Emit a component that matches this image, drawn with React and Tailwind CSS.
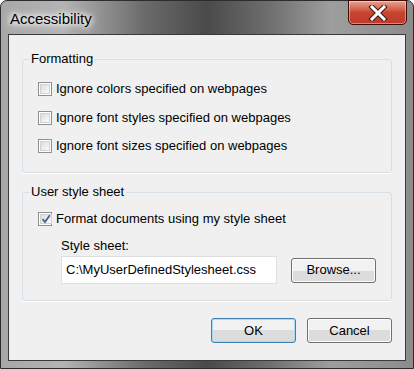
import React from 'react';

const font = { fontFamily: '"Segoe UI", Tahoma, "Liberation Sans", sans-serif' };

function CheckBox({ checked }) {
    return (
        <span className="w-[14px] h-[14px] shrink-0 border border-[#8f8f8f] bg-white p-[1px] flex">
            <span className="flex-1 border border-[#d2d2d2] bg-gradient-to-br from-[#dcdcdc] to-[#fbfbfb] flex items-center justify-center">
                {checked && (
                    <svg width="10" height="10" viewBox="0 0 10 10">
                        <path d="M1.5 5.2 L4 8 L8.8 1.2" fill="none" stroke="#4a5f97" strokeWidth="1.8" />
                    </svg>
                )}
            </span>
        </span>
    );
}

function Check({ label, checked }) {
    return (
        <label className="flex items-center gap-[4px] h-[14px] text-[13px] text-black">
            <CheckBox checked={checked} />
            <span>{label}</span>
        </label>
    );
}

function Button({ children, focused, className = '' }) {
    return (
        <button
            className={
                'h-[25px] rounded-[3px] border text-[13px] text-black bg-gradient-to-b from-[#f2f2f2] from-50% to-[#dcdcdc] to-50% ' +
                (focused ? 'border-[#3c7fb1] shadow-[inset_0_0_0_1px_#a8dcf4] ' : 'border-[#707070] shadow-[inset_0_0_0_1px_#fcfcfc] ') +
                className
            }
        >
            {children}
        </button>
    );
}

function GroupBox({ title, className = '', children }) {
    return (
        <fieldset className={'border border-[#d5dfe5] rounded-[3px] shadow-[0_1px_0_#fff] px-[15px] ' + className}>
            <legend className="ml-[-9px] px-[2px] text-[13px] leading-[14px] text-black">{title}</legend>
            {children}
        </fieldset>
    );
}

export default function App() {
    return (
        <div
            className="w-[414px] h-[369px] flex flex-col rounded-t-[7px] border border-[#2d2d2d] bg-[linear-gradient(90deg,#a8a8a8_0%,#b4b4b4_15%,#6a6a6a_35%,#4a4a4a_50%,#6e6e6e_65%,#9e9e9e_80%,#8c8c8c_100%)]"
            style={font}
        >
            <div className="h-[33px] flex items-start relative">
                <span className="mt-[7px] ml-[9px] text-[15px] text-black [text-shadow:0_0_8px_#fff,0_0_8px_#fff,0_0_5px_#fff]">
                    Accessibility
                </span>
                <div className="ml-auto mr-[6px] mt-[-1px] w-[59px] h-[25px] rounded-b-[5px] border border-[#3d0c07] bg-gradient-to-b from-[#e8a493] via-[#c7452f] to-[#c0392b] shadow-[inset_0_0_0_1px_rgba(255,255,255,0.4)] flex items-center justify-center">
                    <svg width="20" height="16" viewBox="0 0 20 16">
                        <path d="M4 2 L16 14 M16 2 L4 14" stroke="#3a1a16" strokeWidth="5" strokeLinecap="square" />
                        <path d="M4 2 L16 14 M16 2 L4 14" stroke="#fff" strokeWidth="3" strokeLinecap="square" />
                    </svg>
                </div>
            </div>
            <div className="mx-[7px] mb-[7px] flex-1 border border-[#3a3a3a] bg-[#f0f0f0] flex flex-col px-[13px] pt-[17px]">
                <GroupBox title="Formatting" className="h-[121px] pt-[16px]">
                    <div className="flex flex-col gap-[14.5px]">
                        <Check label="Ignore colors specified on webpages" />
                        <Check label="Ignore font styles specified on webpages" />
                        <Check label="Ignore font sizes specified on webpages" />
                    </div>
                </GroupBox>
                <GroupBox title="User style sheet" className="mt-[12px] h-[116px] pt-[13px]">
                    <Check label="Format documents using my style sheet" checked />
                    <div className="ml-[23px] mt-[12px] text-[13px] text-black leading-[16px]">Style sheet:</div>
                    <div className="ml-[23px] mt-[2px] flex items-center gap-[14px]">
                        <div className="w-[216px] h-[28px] border border-[#e0e0e0] bg-white flex items-center px-[4px] text-[13px] text-black">
                            C:\MyUserDefinedStylesheet.css
                        </div>
                        <Button className="w-[85px]">Browse...</Button>
                    </div>
                </GroupBox>
                <div className="mt-[17px] flex justify-end gap-[11px]">
                    <Button focused className="w-[85px]">OK</Button>
                    <Button className="w-[85px]">Cancel</Button>
                </div>
            </div>
        </div>
    );
}
